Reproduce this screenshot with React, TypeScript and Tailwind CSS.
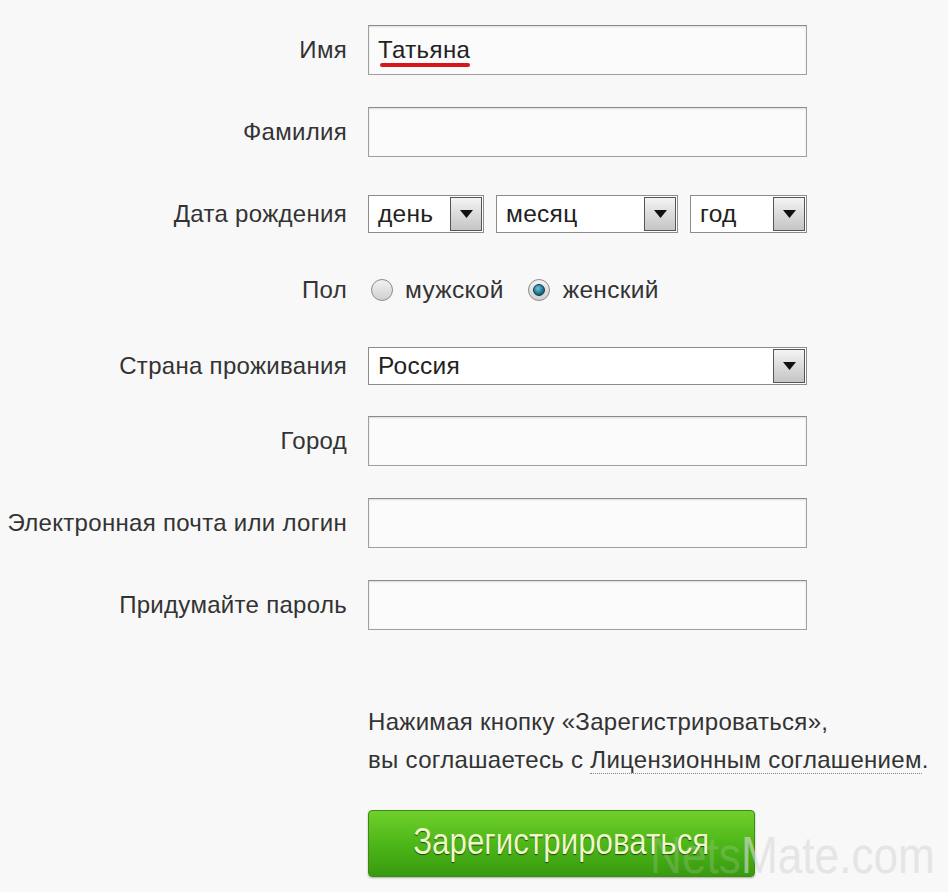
import React from "react";

const font = { fontFamily: '"Liberation Sans", Arial, sans-serif' };

function Label({ children }: { children: React.ReactNode }) {
  return (
    <div className="w-[347px] shrink-0 whitespace-nowrap text-right text-[24px] tracking-[0.3px] text-[#333]">
      {children}
    </div>
  );
}

function TextBox({ value, underline }: { value?: string; underline?: boolean }) {
  return (
    <div className="relative flex h-[50px] w-[439px] items-center border border-[#a0a0a0] border-t-[#8a8a8a] bg-[#fbfbfb] px-[9px] shadow-[inset_0_1px_2px_rgba(0,0,0,0.12)]">
      {value && (
        <span className="relative text-[24px] leading-none tracking-[0.4px] text-[#222]">
          {value}
          {underline && (
            <span className="absolute left-[2px] right-0 top-[25px] h-[4px] rounded-full bg-[#d9141c]" />
          )}
        </span>
      )}
    </div>
  );
}

function Arrow() {
  return (
    <div className="flex h-full w-[32px] shrink-0 items-center justify-center border border-[#555] bg-gradient-to-b from-[#f4f4f4] to-[#c4c4c4]">
      <svg width="13" height="8" viewBox="0 0 13 8">
        <path d="M0 0 L13 0 L6.5 8 Z" fill="#111" />
      </svg>
    </div>
  );
}

function Select({ value, width }: { value: string; width: string }) {
  return (
    <div className={`flex h-[38px] ${width} items-stretch border border-[#8c8c8c] bg-white p-[1px]`}>
      <div className="flex flex-1 items-center pl-[8px] text-[24.5px] tracking-[0.3px] text-[#222]">{value}</div>
      <Arrow />
    </div>
  );
}

function Radio({ checked }: { checked?: boolean }) {
  return (
    <div className="flex h-[22px] w-[22px] shrink-0 items-center justify-center rounded-full border border-[#8a8a8a] bg-gradient-to-b from-[#f2f2f2] to-[#d0d0d0]">
      {checked && (
        <div className="h-[12px] w-[12px] rounded-full border border-[#0d3b4a] bg-[radial-gradient(circle_at_40%_35%,#6fc6e0,#1a6f8a_60%,#0d3b4a)]" />
      )}
    </div>
  );
}

export default function App() {
  return (
    <div className="relative min-h-[892px] w-[948px] overflow-hidden bg-[#f8f8f8] pt-[25px]" style={font}>
      <div className="flex flex-col">
        <div className="flex items-center gap-[21px]">
          <Label>Имя</Label>
          <TextBox value="Татьяна" underline />
        </div>
        <div className="mt-[32px] flex items-center gap-[21px]">
          <Label>Фамилия</Label>
          <TextBox />
        </div>
        <div className="mt-[38px] flex items-center gap-[21px]">
          <Label>Дата рождения</Label>
          <div className="flex gap-[12px]">
            <Select value="день" width="w-[116px]" />
            <Select value="месяц" width="w-[182px]" />
            <Select value="год" width="w-[117px]" />
          </div>
        </div>
        <div className="mt-[38px] flex h-[38px] items-center gap-[21px]">
          <Label>Пол</Label>
          <div className="flex items-center pl-[3px] text-[24.5px] tracking-[0.3px] text-[#333]">
            <Radio />
            <span className="ml-[12px]">мужской</span>
            <span className="ml-[24px]">
              <Radio checked />
            </span>
            <span className="ml-[13px]">женский</span>
          </div>
        </div>
        <div className="mt-[38px] flex items-center gap-[21px]">
          <Label>Страна проживания</Label>
          <Select value="Россия" width="w-[439px]" />
        </div>
        <div className="mt-[31px] flex items-center gap-[21px]">
          <Label>Город</Label>
          <TextBox />
        </div>
        <div className="mt-[32px] flex items-center gap-[21px]">
          <Label>Электронная почта или логин</Label>
          <TextBox />
        </div>
        <div className="mt-[32px] flex items-center gap-[21px]">
          <Label>Придумайте пароль</Label>
          <TextBox />
        </div>

        <div className="ml-[368px] mt-[73px] whitespace-nowrap text-[24px] leading-[38px] tracking-[0.3px] text-[#333]">
          <div>Нажимая кнопку «Зарегистрироваться»,</div>
          <div>
            вы соглашаетесь с{" "}
            <span className="border-b border-dotted border-[#888]">Лицензионным соглашением</span>.
          </div>
        </div>

        <div className="ml-[368px] mt-[31px]">
          <button className="flex h-[67px] w-[387px] items-center justify-center rounded-[4px] border border-[#3d8a10] bg-gradient-to-b from-[#70d02a] via-[#4db719] to-[#389a0f] pb-[3px] shadow-[0_1px_2px_rgba(0,0,0,0.3)]">
            <span className="inline-block scale-x-[0.87] whitespace-nowrap text-[36px] leading-none text-[#ecf9c4] [text-shadow:0_1px_1px_rgba(0,0,0,0.6)]">
              Зарегистрироваться
            </span>
          </button>
        </div>
      </div>
      <div className="pointer-events-none absolute left-[650px] top-[829px] origin-left scale-x-[0.85] whitespace-nowrap text-[52px] font-light leading-none text-[#dadada]">
        <span className="opacity-20">Nets</span>
        <span className="opacity-60">Mate.com</span>
      </div>
    </div>
  );
}
